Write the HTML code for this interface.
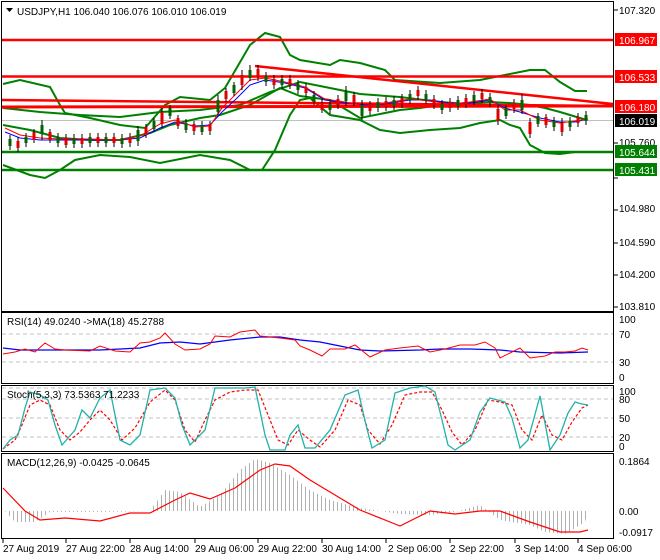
<!DOCTYPE html>
<html><head><meta charset="utf-8"><style>
html,body{margin:0;padding:0;background:#fff;}
svg{display:block;font-family:"Liberation Sans",sans-serif;}
text{font-size:10px;fill:#000;}
</style></head><body>
<svg width="660" height="560" viewBox="0 0 660 560">
<defs>
<pattern id="vl" width="4" height="10" patternUnits="userSpaceOnUse"><rect x="1" y="0" width="1" height="10" fill="#b0b0b0"/></pattern>
<clipPath id="cm"><rect x="2" y="2" width="611" height="309"/></clipPath>
</defs>
<rect width="660" height="560" fill="#fff"/>
<rect x="1.5" y="1.5" width="612" height="310" fill="none" stroke="#000"/>
<rect x="1.5" y="312.5" width="612" height="71" fill="none" stroke="#000"/>
<rect x="1.5" y="385.5" width="612" height="66" fill="none" stroke="#000"/>
<rect x="1.5" y="453.5" width="612" height="85" fill="none" stroke="#000"/>

<g clip-path="url(#cm)" fill="none">
<line x1="2" y1="120.5" x2="613" y2="120.5" stroke="#c0c0c0"/>
<line x1="2" y1="152" x2="613" y2="152" stroke="#008000" stroke-width="2.5"/>
<line x1="2" y1="170" x2="613" y2="170" stroke="#008000" stroke-width="2.5"/>
<polyline stroke="#008000" stroke-width="2" points="3,84 20,80 50,87 60,105 65,113 90,118 120,125 145,128 165,105 180,97 210,100 225,88 250,45 265,33 280,37 290,55 300,60 330,65 340,60 360,63 385,70 395,80 410,81 440,83 480,80 530,70 545,70 560,82 575,91 587,91"/>
<polyline stroke="#008000" stroke-width="2" points="3,108 40,112 80,115 120,117 160,112 200,110 240,105 270,92 300,82 330,88 360,94 400,97 440,102 480,105 520,106 560,106 587,106"/>
<polyline stroke="#008000" stroke-width="2" points="3,125 30,130 60,138 90,140 120,140 150,133 170,125 200,118 220,115 250,105 280,88 300,96 330,100 360,118 400,110 420,108 440,105 470,103 490,102 510,103 530,105 545,108 560,112 580,118 587,120"/>
<polyline stroke="#008000" stroke-width="2" points="3,165 30,175 45,178 60,170 75,160 100,155 130,157 160,163 200,155 230,160 250,170 262,170 275,150 290,115 300,100 310,98 330,115 360,120 380,130 400,133 430,130 460,128 480,123 500,120 510,125 520,128 530,145 545,153 560,154 575,152"/>
<line x1="2" y1="40" x2="613" y2="40" stroke="#ff0000" stroke-width="2.5"/>
<line x1="2" y1="76.5" x2="613" y2="76.5" stroke="#ff0000" stroke-width="2.5"/>
<line x1="2" y1="100" x2="613" y2="106" stroke="#ff0000" stroke-width="2.5"/>
<line x1="2" y1="107" x2="613" y2="106" stroke="#ff0000" stroke-width="3"/>
<line x1="255" y1="66" x2="613" y2="104" stroke="#ff0000" stroke-width="2.5"/>
<polyline stroke="#0000ff" stroke-width="1" points="5,132 20,138 40,140 60,140 90,140 120,140 140,138 160,128 175,122 195,126 210,125 222,112 235,100 250,85 265,80 285,83 305,88 325,100 345,103 365,105 385,104 410,100 430,100 450,103 470,103 490,100 505,108 520,112 540,118 560,122 575,122 588,119"/>
<polyline stroke="#ff0000" stroke-width="1" points="5,128 20,135 40,138 60,139 90,139 120,140 140,136 160,124 175,120 195,127 210,126 222,108 235,95 250,80 265,78 285,82 305,87 325,99 345,102 365,106 385,103 410,99 430,101 450,104 470,102 490,99 505,110 520,110 540,120 560,123 575,121 588,119"/>
<!-- candles -->
<path stroke="#000" stroke-width="1" d="M10,135V150M18,137V152M26,133V147M34,129V143M42,120V140M50,129V143M58,133V147M66,134V148M74,134V148M82,134V148M90,133V147M98,133V147M106,133V147M114,133V147M122,134V148M130,133V147M138,126V146M146,124V138M154,118V132M162,108V128M170,105V119M178,115V129M186,119V133M194,121V135M202,121V135M210,121V135M218,95V115M226,88V102M234,82V96M242,70V90M250,65V81M258,65V81M266,72V86M274,75V89M282,75V89M290,75V89M298,80V94M306,83V97M314,91V105M322,99V113M330,100V114M338,95V109M346,86V106M354,92V106M362,100V120M370,101V115M378,98V112M386,97V111M394,96V110M402,94V108M410,90V104M418,86V100M426,90V104M434,95V109M442,100V114M450,98V112M458,96V110M466,94V108M474,91V105M482,89V103M490,93V107M498,105V125M506,105V119M514,99V113M522,94V114M530,118V138M538,113V127M546,114V128M554,117V131M562,118V136M570,117V131M578,113V127M586,111V125"/>
<path stroke="#006400" stroke-width="3" d="M10,139V146M26,137V143M42,125V134M58,137V143M74,138V144M90,137V143M106,137V143M122,138V144M138,130V141M154,121V129M170,108V116M186,123V130M202,125V132M218,100V112M234,85V93M250,70V78M266,76V82M282,79V85M298,84V90M314,95V102M330,104V110M346,92V101M362,105V116M378,102V108M394,100V106M410,94V100M426,94V100M442,104V110M458,100V106M474,95V101M490,97V103M506,108V116M522,100V110M538,116V124M554,121V127M570,121V127M586,115V121"/>
<path stroke="#e00000" stroke-width="3" d="M18,141V148M34,132V140M50,132V140M66,138V145M82,138V144M98,137V143M114,137V143M130,137V143M146,127V135M162,112V124M178,118V126M194,124V131M210,124V131M226,91V99M242,75V85M258,69V77M274,79V85M290,79V85M306,87V93M322,103V110M338,99V105M354,95V103M370,104V111M386,101V107M402,98V104M418,90V96M434,99V105M450,102V108M466,98V104M482,93V99M498,109V121M514,103V109M530,122V134M546,117V125M562,123V132M578,117V123"/>
</g>
<text x="17" y="15">USDJPY,H1  106.040 106.076 106.010 106.019</text>
<path d="M6,8h7l-3.5,4z" fill="#000"/>

<g stroke="#000"><path d="M614,10h4M614,307h4M614,143h4M614,178h4M614,210h4M614,243h4M614,275h4"/></g>
<text x="619" y="14">107.320</text>
<text x="619" y="146">105.760</text>
<text x="619" y="212">104.980</text>
<text x="619" y="246">104.590</text>
<text x="619" y="278">104.200</text>
<text x="619" y="310">103.810</text>
<rect x="615" y="33" width="42" height="13" fill="#ff0000"/><text x="619" y="44" style="fill:#fff">106.967</text>
<rect x="615" y="70" width="42" height="13" fill="#ff0000"/><text x="619" y="81" style="fill:#fff">106.533</text>
<rect x="615" y="100" width="42" height="13" fill="#ff0000"/><text x="619" y="111" style="fill:#fff">106.180</text>
<rect x="615" y="114" width="42" height="13" fill="#000"/><text x="619" y="125" style="fill:#fff">106.019</text>
<rect x="615" y="145" width="42" height="13" fill="#008000"/><text x="619" y="156" style="fill:#fff">105.644</text>
<rect x="615" y="163" width="42" height="13" fill="#008000"/><text x="619" y="174" style="fill:#fff">105.431</text>

<g stroke="#c0c0c0" stroke-dasharray="4,3"><line x1="2" y1="334" x2="613" y2="334"/><line x1="2" y1="362" x2="613" y2="362"/></g>
<polyline fill="none" stroke="#0000ff" stroke-width="1.2" points="3,348 20,350 60,350 100,350 140,348 160,343 180,342 200,344 230,340 260,337 280,337 300,340 320,342 340,346 360,350 380,351 420,350 440,349 470,349 500,350 520,352 560,353 588,352"/>
<polyline fill="none" stroke="#ff0000" stroke-width="1" points="3,354 15,352 25,349 35,352 45,343 55,349 65,350 90,351 100,346 115,351 130,352 140,343 150,342 160,338 165,333 175,344 185,350 200,349 210,344 215,336 230,337 240,332 255,330 260,336 270,337 280,338 295,340 300,346 310,350 322,356 330,349 345,349 355,345 370,357 385,350 400,348 418,346 430,352 445,349 460,345 475,345 485,342 495,348 500,358 510,353 520,348 530,358 545,356 555,352 565,352 575,351 582,348 588,350"/>
<text x="7" y="325">RSI(14) 49.0240  -&gt;MA(18) 45.2788</text>
<text x="619" y="323">100</text><text x="619" y="338">70</text><text x="619" y="366">30</text><text x="619" y="381">0</text>

<g stroke="#c0c0c0" stroke-dasharray="4,3"><line x1="2" y1="388" x2="613" y2="388"/><line x1="2" y1="399" x2="613" y2="399"/><line x1="2" y1="418" x2="613" y2="418"/><line x1="2" y1="437" x2="613" y2="437"/></g>
<polyline fill="none" stroke="#ff0000" stroke-width="1.2" stroke-dasharray="3,2" points="3,449 15,440 22,425 30,405 40,400 50,405 60,430 70,440 80,432 90,420 100,410 110,420 122,440 135,428 150,402 165,390 175,400 185,430 195,442 205,420 215,400 230,392 245,390 258,390 268,415 278,440 288,445 298,430 310,440 320,447 335,430 348,400 360,405 368,430 380,444 392,425 405,395 420,392 432,392 442,410 452,432 462,445 475,430 488,400 500,402 512,405 522,430 532,440 542,415 552,435 562,440 572,422 582,408 588,405"/>
<polyline fill="none" stroke="#20b2aa" stroke-width="1.3" points="3,449 10,440 18,435 25,408 30,392 40,395 48,400 55,425 62,445 75,430 82,410 90,418 100,398 110,390 120,440 130,445 140,435 150,390 165,388 175,398 182,425 190,445 205,430 215,388 245,388 255,387 265,435 270,450 285,450 290,435 298,425 305,448 315,448 330,430 345,395 358,390 366,425 372,448 385,440 395,393 410,388 425,386 435,392 442,420 448,445 455,450 470,440 480,412 490,398 505,402 512,418 520,448 528,440 540,396 550,450 560,435 568,413 575,402 582,404 588,405"/>
<text x="7" y="398">Stoch(5,3,3) 73.5363 71.2233</text>
<text x="619" y="395">100</text><text x="619" y="403">80</text><text x="619" y="422">50</text><text x="619" y="441">20</text><text x="619" y="450">0</text>

<polygon fill="url(#vl)" points="5,511 15,522 35,522 50,512 100,512 150,511 165,490 180,492 200,507 220,495 240,470 255,459 270,463 290,475 310,490 330,500 360,508 400,514 430,515 455,512 480,505 500,520 530,525 545,532 565,534 585,522 588,511"/>
<polyline fill="none" stroke="#ff0000" stroke-width="1.2" points="3,488 25,511 40,520 65,518 100,521 130,513 150,513 175,500 190,493 210,499 235,488 260,470 275,464 290,466 310,480 330,492 360,510 400,526 430,511 455,514 480,511 500,511 530,522 560,532 580,532 588,530"/>
<text x="7" y="466">MACD(12,26,9) -0.0425 -0.0645</text>
<text x="619" y="465">0.1864</text><text x="619" y="515">0.00</text><text x="619" y="536">-0.0917</text>

<g stroke="#000"><path d="M3,539v4M66,539v4M130,539v4M195,539v4M258,539v4M322,539v4M386,539v4M450,539v4M515,539v4M578,539v4"/></g>
<text x="3" y="552">27 Aug 2019</text>
<text x="66" y="552">27 Aug 22:00</text>
<text x="130" y="552">28 Aug 14:00</text>
<text x="195" y="552">29 Aug 06:00</text>
<text x="258" y="552">29 Aug 22:00</text>
<text x="322" y="552">30 Aug 14:00</text>
<text x="388" y="552">2 Sep 06:00</text>
<text x="450" y="552">2 Sep 22:00</text>
<text x="515" y="552">3 Sep 14:00</text>
<text x="578" y="552">4 Sep 06:00</text>
</svg>
</body></html>
